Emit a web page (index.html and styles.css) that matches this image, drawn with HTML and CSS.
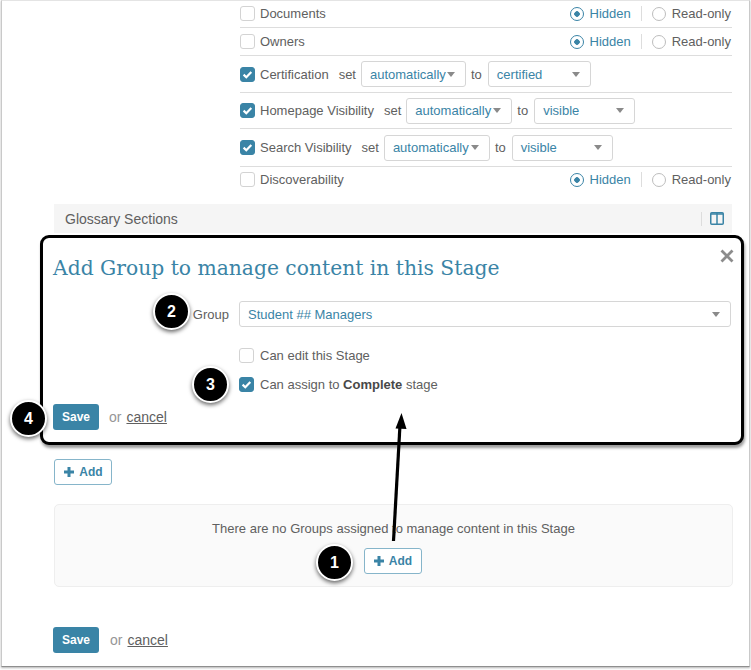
FILE: index.html
```html
<!DOCTYPE html>
<html lang="en">
<head>
<meta charset="utf-8">
<title>Add Group to manage content in this Stage</title>
<link rel="stylesheet" href="styles.css">
</head>
<body>
<div class="page">
  <main class="frame">
    <section class="rows">
      <div class="row h27">
        <span class="check"></span><span class="label">Documents</span>
        <div class="radios"><span class="radio on"></span><span class="hidden-text">Hidden</span><span class="sep"></span><span class="radio"></span><span>Read-only</span></div>
      </div>
      <div class="row h28">
        <span class="check"></span><span class="label">Owners</span>
        <div class="radios"><span class="radio on"></span><span class="hidden-text">Hidden</span><span class="sep"></span><span class="radio"></span><span>Read-only</span></div>
      </div>
      <div class="row h37">
        <span class="check checked"><svg viewBox="0 0 15 15"><path d="M3.6 7.6l2.7 2.6 5-5.2" fill="none" stroke="#fff" stroke-width="2.2"/></svg></span><span class="label">Certification</span>
        <span class="word-set">set</span>
        <span class="select w105"><span>automatically</span><i class="caret"></i></span>
        <span class="word-to">to</span>
        <span class="select w103"><span>certified</span><i class="caret"></i></span>
      </div>
      <div class="row h36">
        <span class="check checked"><svg viewBox="0 0 15 15"><path d="M3.6 7.6l2.7 2.6 5-5.2" fill="none" stroke="#fff" stroke-width="2.2"/></svg></span><span class="label">Homepage Visibility</span>
        <span class="word-set">set</span>
        <span class="select w106"><span>automatically</span><i class="caret"></i></span>
        <span class="word-to">to</span>
        <span class="select w101"><span>visible</span><i class="caret"></i></span>
      </div>
      <div class="row h38">
        <span class="check checked"><svg viewBox="0 0 15 15"><path d="M3.6 7.6l2.7 2.6 5-5.2" fill="none" stroke="#fff" stroke-width="2.2"/></svg></span><span class="label">Search Visibility</span>
        <span class="word-set">set</span>
        <span class="select w106"><span>automatically</span><i class="caret"></i></span>
        <span class="word-to">to</span>
        <span class="select w101"><span>visible</span><i class="caret"></i></span>
      </div>
      <div class="row h27 last">
        <span class="check"></span><span class="label">Discoverability</span>
        <div class="radios"><span class="radio on"></span><span class="hidden-text">Hidden</span><span class="sep"></span><span class="radio"></span><span>Read-only</span></div>
      </div>
    </section>

    <div class="section-bar">
      <span>Glossary Sections</span>
      <span class="bar-sep"></span>
      <svg class="columns-icon" viewBox="0 0 14 13"><rect x="0.75" y="0.75" width="12.5" height="11.5" rx="1" fill="none" stroke="#3a84a6" stroke-width="1.5"/><path d="M7 1v11" stroke="#3a84a6" stroke-width="1.5"/><path d="M1 2h12" stroke="#3a84a6" stroke-width="1.5"/></svg>
    </div>

    <section class="callout">
      <svg class="close" viewBox="0 0 14 14"><path d="M1.5 1.5l11 11M12.5 1.5l-11 11" stroke="#8c8c8c" stroke-width="2.8"/></svg>
      <h1 class="title">Add Group to manage content in this Stage</h1>
      <div class="group-row">
        <span class="group-label">Group</span>
        <span class="select group-select"><span>Student ## Managers</span><i class="caret"></i></span>
      </div>
      <div class="option first-option"><span class="check"></span><span class="label">Can edit this Stage</span></div>
      <div class="option"><span class="check checked"><svg viewBox="0 0 15 15"><path d="M3.6 7.6l2.7 2.6 5-5.2" fill="none" stroke="#fff" stroke-width="2.2"/></svg></span><span class="label">Can assign to <b>Complete</b> stage</span></div>
      <div class="actions callout-actions"><span class="save">Save</span><span class="or">or</span><a class="cancel">cancel</a></div>
    </section>

    <div class="add-wrap"><span class="add"><svg viewBox="0 0 12 12"><path d="M6 1v10M1 6h10" stroke="#3a84a6" stroke-width="3"/></svg>Add</span></div>

    <section class="empty">
      <p class="empty-text">There are no Groups assigned to manage content in this Stage</p>
      <span class="add"><svg viewBox="0 0 12 12"><path d="M6 1v10M1 6h10" stroke="#3a84a6" stroke-width="3"/></svg>Add</span>
    </section>

    <div class="actions page-actions"><span class="save">Save</span><span class="or">or</span><a class="cancel">cancel</a></div>
  </main>

  <svg class="arrow" viewBox="0 0 751 670"><path d="M393.500 541L400 425" stroke="#000" stroke-width="3.200" fill="none"/><path d="M401.500 413L406.500 429L395.500 428.500Z" fill="#000"/></svg>
  <span class="badge b1">1</span>
  <span class="badge b2">2</span>
  <span class="badge b3">3</span>
  <span class="badge b4">4</span>
</div>
</body>
</html>
```
FILE: styles.css
```css
* { box-sizing: border-box; }
html, body { margin: 0; padding: 0; background: #fff; }
body {
  font-family: "Liberation Sans", Arial, sans-serif;
  font-size: 13px;
  color: #606060;
  overflow: hidden;
}
.page { position: relative; width: 751px; height: 670px; overflow: hidden; }
.frame {
  margin-left: 1px;
  width: 749px;
  height: 667px;
  padding-left: 52px;
  background: #fff;
  border: 1px solid #c9c9c9;
  border-top-color: #e4e4e4;
  border-bottom-color: #8f8f8f;
  box-shadow: 0 1px 2px rgba(0,0,0,.3);
}

/* setting rows */
.rows { margin-left: 186px; width: 492px; }
.row { display: flex; align-items: center; border-bottom: 1px solid #ddd; }
.row.last { border-bottom: 0; padding-bottom: 2px; }
.h27 { height: 27px; padding-bottom: 1px; }
.h28 { height: 28px; }
.h36 { height: 36px; }
.h37 { height: 37px; }
.h38 { height: 38px; }
.check {
  flex: none;
  width: 15px;
  height: 15px;
  border: 1px solid #d3d3d3;
  border-radius: 3px;
  background: #fff;
}
.check.checked { background: #3a84a6; border-color: #3a84a6; }
.check svg { display: block; width: 15px; height: 15px; margin: -1px; }
.label { margin-left: 5px; white-space: nowrap; }
.label b { color: #484848; }
.radios { display: flex; align-items: center; margin-left: auto; padding-right: 1px; }
.radio {
  flex: none;
  width: 14px;
  height: 14px;
  margin-right: 6px;
  border: 1px solid #bdbdbd;
  border-radius: 50%;
  background: #fff;
}
.radio.on {
  border: 1.500px solid #3a84a6;
  background: radial-gradient(circle, #3a84a6 0 2.500px, #fff 3px);
}
.hidden-text { color: #3a84a6; }
.sep { width: 1px; height: 15px; margin: 0 10px; background: #ddd; }
.word-set { margin-left: 10px; margin-right: 5px; }
.word-to { margin: 0 6px 0 5px; }
.select {
  display: flex;
  align-items: center;
  justify-content: space-between;
  flex: none;
  height: 26px;
  padding: 0 10px 0 8px;
  color: #3a84a6;
  background: #fff;
  border: 1px solid #d6d6d6;
  border-radius: 3px;
}
.w101 { width: 101px; }
.w103 { width: 103px; }
.w105 { width: 105px; }
.w106 { width: 106px; }
.caret {
  flex: none;
  width: 0;
  height: 0;
  border-left: 4px solid transparent;
  border-right: 4px solid transparent;
  border-top: 5px solid #8a8a8a;
}

/* section bar */
.section-bar {
  display: flex;
  align-items: center;
  width: 678px;
  height: 29px;
  margin-top: 10px;
  padding: 0 8px 0 11px;
  font-size: 14px;
  background: #f5f5f5;
}
.bar-sep { width: 1px; height: 14px; margin-left: auto; background: #ddd; }
.columns-icon { width: 14px; height: 13px; margin-left: 8px; }

/* highlighted form */
.callout {
  position: relative;
  width: 704px;
  height: 210px;
  margin: 2px 0 0 -14px;
  padding: 0 0 0 10px;
  background: #fff;
  border: 3px solid #000;
  border-radius: 9px;
  box-shadow: 1px 3px 3px rgba(0,0,0,.4);
}
.close { position: absolute; top: 11px; right: 7px; width: 14px; height: 14px; }
.title {
  margin: 0;
  padding-top: 17px;
  font-family: "DejaVu Serif", "Liberation Serif", serif;
  font-weight: 400;
  font-size: 20.300px;
  line-height: 27px;
  color: #3a84a6;
}
.group-row { display: flex; align-items: center; margin-top: 19px; }
.group-label { width: 176px; text-align: right; }
.group-select { width: 492px; margin-left: 10px; }
.option { display: flex; align-items: center; height: 29px; margin-left: 186px; }
.option .label { margin-left: 6px; }
.first-option { margin-top: 14px; }
.actions { display: flex; align-items: center; }
.callout-actions { margin-top: 5px; }
.save {
  width: 46px;
  height: 26px;
  font-weight: 700;
  font-size: 12px;
  line-height: 26px;
  text-align: center;
  color: #fff;
  background: #3a84a6;
  border-radius: 3px;
}
.or { margin-left: 10px; font-size: 14px; color: #969696; }
.cancel { margin-left: 5px; font-size: 14px; color: #606060; text-decoration: underline; }

/* add button and empty state */
.add-wrap { margin-top: 14px; }
.add {
  display: inline-flex;
  align-items: center;
  justify-content: center;
  gap: 4px;
  width: 58px;
  height: 26px;
  font-weight: 700;
  font-size: 12px;
  color: #3a84a6;
  background: #fff;
  border: 1px solid #86b5ca;
  border-radius: 3px;
}
.add svg { width: 12px; height: 12px; }
.empty {
  width: 679px;
  height: 83px;
  margin-top: 19px;
  padding: 16px 2px 0 0;
  text-align: center;
  background: #fafafa;
  border: 1px solid #eee;
  border-radius: 5px;
}
.empty-text { margin: 0 0 12px; padding-left: 2px; line-height: 15px; }
.page-actions { margin-top: 40px; margin-left: -1px; }
.page-actions .or { margin-left: 11px; }

/* annotations */
.arrow { position: absolute; inset: 0; width: 751px; height: 670px; pointer-events: none; }
.badge {
  position: absolute;
  width: 37px;
  height: 37px;
  font-weight: 700;
  font-size: 16px;
  line-height: 33px;
  text-align: center;
  color: #fff;
  background: #000;
  border: 2px solid #fff;
  border-radius: 50%;
  box-shadow: 0 2px 4px rgba(0,0,0,.6);
}
.b1 { left: 316px; top: 544px; }
.b2 { left: 153px; top: 293px; }
.b3 { left: 192px; top: 366px; }
.b4 { left: 10px; top: 400px; }
```
